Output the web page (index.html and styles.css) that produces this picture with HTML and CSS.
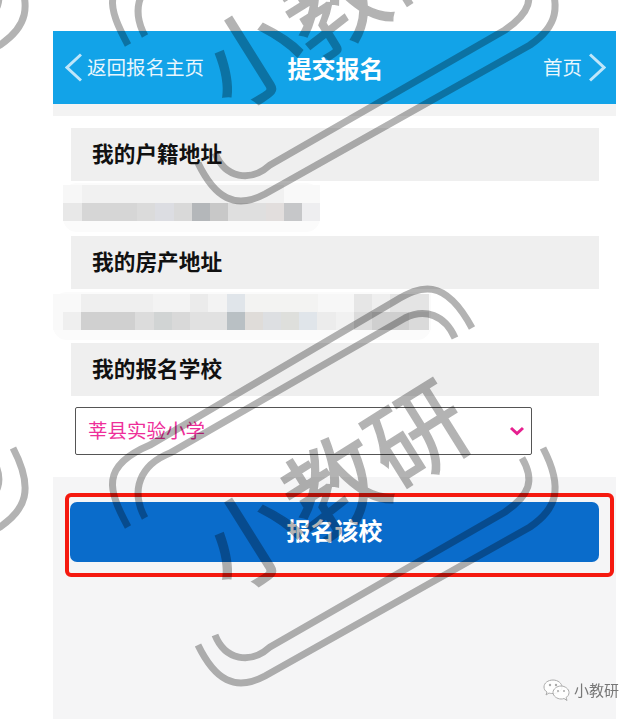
FILE: index.html
```html
<!DOCTYPE html>
<html lang="zh-CN">
<head>
    <meta charset="UTF-8">
    <meta name="viewport" content="width=device-width, initial-scale=1.0">
    <title>提交报名</title>
    <link rel="stylesheet" href="styles.css">
</head>
<body>

    <div class="page">
        <header class="topbar">
            <a class="nav nav-back">
                <svg class="chevron" width="17" height="29" viewBox="0 0 17 29"><path d="M16 1.5 2 14.5l14 13"/></svg>
                <span>返回报名主页</span>
            </a>
            <h1 class="title">提交报名</h1>
            <a class="nav nav-home">
                <span>首页</span>
                <svg class="chevron" width="17" height="29" viewBox="0 0 17 29"><path d="M1 1.5l14 13-14 13"/></svg>
            </a>
        </header>
        <div class="strip"></div>

        <section class="form">
            <div class="label">我的户籍地址</div>
            <div class="value value-first">
                <div class="mosaic mosaic-one">
                    <div class="cells cells-top"></div>
                    <div class="cells cells-bottom"></div>
                </div>
            </div>

            <div class="label">我的房产地址</div>
            <div class="value">
                <div class="mosaic mosaic-two">
                    <div class="cells cells-top"></div>
                    <div class="cells cells-bottom"></div>
                </div>
            </div>

            <div class="label">我的报名学校</div>
            <div class="select">
                <span>莘县实验小学</span>
                <svg class="select-arrow" width="16" height="10" viewBox="0 0 16 10"><path d="M2 2l6 5.5L14 2"/></svg>
            </div>
        </section>

        <section class="submit">
            <div class="highlight">
                <button class="submit-btn">报名该校</button>
            </div>
        </section>
    </div>

    <!-- watermark over the whole picture -->
    <svg class="watermark" width="640" height="719" viewBox="0 0 640 719">
        <defs>
            <g id="mark">
                <path class="mark-line" d="M128 527C108 490 100 466 150 445L395 301C420 286 444 276 472 328"/>
                <path class="mark-line" d="M145 518C130 490 140 465 170 453L405 318C425 308 445 315 455 338"/>
                <path class="mark-line" d="M198 645C215 680 235 692 265 676L530 527C555 510 565 490 543 448"/>
                <path class="mark-line" d="M215 635C225 660 250 665 270 647L505 512C530 495 535 480 522 458"/>
                <text class="mark-text" x="335" y="523" text-anchor="middle" transform="rotate(-32 335 487)">小教研</text>
            </g>
        </defs>
        <g class="mark-group">
            <use href="#mark"/>
            <use href="#mark" y="-482"/>
            <use href="#mark" x="-530"/>
            <use href="#mark" x="-530" y="-482"/>
        </g>
    </svg>

    <div class="credit">
        <svg width="28" height="22" viewBox="0 0 28 22">
            <path class="credit-bubble" d="M10 1C5 1 1 4 1 8c0 2 1 4 3 5l-1 3 3-2c1 .4 2 .5 4 .5 5 0 9-3 9-6.500S15 1 10 1z"/>
            <path class="credit-bubble" d="M18 7c-4 0-8 3-8 6.500S14 20 18 20c1 0 2 0 3-.5l3 2-1-3c2-1 3-3 3-5C26 10 22 7 18 7z"/>
            <circle class="credit-dot" cx="7" cy="6" r="1.200"/>
            <circle class="credit-dot" cx="13" cy="6" r="1.200"/>
            <circle class="credit-dot" cx="15" cy="12" r="1"/>
            <circle class="credit-dot" cx="21" cy="12" r="1"/>
        </svg>
        <span>小教研</span>
    </div>

</body>
</html>
```

FILE: styles.css
```css
* {
    box-sizing: border-box;
}

html, body {
    margin: 0;
    height: 100%;
    overflow: hidden;
}

body {
    position: relative;
    background: white;
    font-family: "Noto Sans CJK SC", "Liberation Sans", sans-serif;
}

.page {
    display: flex;
    flex-direction: column;
    width: 563px;
    height: 100vh;
    margin-left: 53px;
    padding-top: 31px;
}

.topbar {
    display: grid;
    grid-template-columns: 1fr auto 1fr;
    align-items: center;
    height: 73px;
    padding: 0 10px 0 12px;
    background: #12a3e8;
    color: white;
}

.title {
    margin: 0;
    font-size: 24px;
    font-weight: 700;
    line-height: 28px;
}

.nav {
    display: flex;
    align-items: center;
    gap: 5px;
    font-size: 19.5px;
    line-height: 25px;
    color: #e8f6fd;
}

.nav span {
    padding-bottom: 2px;
}

.nav-home {
    justify-content: flex-end;
    gap: 7px;
}

.chevron path {
    fill: none;
    stroke: #bfe6fa;
    stroke-width: 3;
}

.strip {
    height: 12px;
    background: #f3f3f3;
}

.form {
    padding: 12px 17px 0 18px;
}

.label {
    height: 53px;
    padding-left: 21px;
    background: #efefef;
    color: #111;
    font-size: 21.7px;
    font-weight: 700;
    line-height: 50px;
}

.value {
    display: flow-root;
    height: 54px;
}

.value-first {
    height: 55px;
}

.mosaic {
    padding-top: 2px;
    background: #fbfbfb;
    border-radius: 14px;
    filter: blur(0.7px);
}

.mosaic-one {
    width: 257px;
    height: 49px;
    margin: 2px 0 0 -8px;
}

.mosaic-two {
    width: 378px;
    height: 48px;
    margin: 3px 0 0 -18px;
}

.cells {
    height: 18px;
}

.mosaic-one .cells-top {
    background: linear-gradient(90deg, #f7f7f7 0 19px, #f1f1f1 19px 221px, #f9f9f9 221px);
}

.mosaic-one .cells-bottom {
    background: linear-gradient(90deg,
        #e8e8e8 0 19px, #d6d6d6 19px 74px, #dbdbdb 74px 92px, #dcdde2 92px 111px,
        #d9d9d9 111px 129px, #b4b7ba 129px 147px, #c8c8c8 147px 165px,
        #dfdfdf 165px 203px, #e2dedd 203px 221px, #c6c7c9 221px 239px, #eeeef0 239px);
}

.mosaic-two .cells-top {
    background: linear-gradient(90deg,
        #f9f9f9 0 28px, #efefef 28px 100px, #f3f3f3 100px 137px, #ebebeb 137px 155px,
        #f3f3f3 155px 174px, #e0e5ea 174px 192px, #f3f3f2 192px 265px, #f7f7f7 265px 301px,
        #e6e6e6 301px 319px, #efefef 319px 337px, #e4e4e4 337px 376px, #fafafa 376px);
}

.mosaic-two .cells-bottom {
    background: linear-gradient(90deg,
        #f9f9f9 0 10px, #efefef 10px 28px, #d0d0d0 28px 82px, #dcdcdc 82px 101px,
        #d1d4d4 101px 119px, #d9d9d9 119px 137px, #e1e1e1 137px 174px, #b9c0c4 174px 192px,
        #dfdcd9 192px 210px, #dddfe2 210px 228px, #dedfdc 228px 246px, #e0e5ea 246px 264px,
        #ececec 264px 283px, #f1f1f1 283px 301px, #dcdcdc 301px 319px, #cfcfcf 319px 356px,
        #dadada 356px 376px, #fafafa 376px);
}

.select {
    display: flex;
    align-items: center;
    justify-content: space-between;
    width: 457px;
    height: 48px;
    margin: 11px 0 0 4px;
    padding: 0 6px 0 12px;
    background: white;
    border: 1px solid #555;
    border-radius: 2px;
    color: #ee2f9a;
    font-size: 19.5px;
}

.select span {
    padding-bottom: 3px;
}

.select-arrow path {
    fill: none;
    stroke: #e6208f;
    stroke-width: 3;
}

.submit {
    flex: 1;
    margin-top: 22px;
    padding: 16px 2px 0 12px;
    background: #f5f5f6;
}

.highlight {
    padding: 5px 11px 11px 1px;
    border: 4px solid #f5190f;
    border-radius: 6px;
}

.submit-btn {
    display: block;
    width: 100%;
    height: 60px;
    padding: 0 0 5px;
    border: none;
    border-radius: 7px;
    background: #0a6ccb;
    color: white;
    font-family: inherit;
    font-size: 24px;
    font-weight: 700;
}

.watermark {
    position: absolute;
    top: 0;
    left: 0;
    pointer-events: none;
}

.mark-group {
    opacity: 0.3;
}

.mark-line {
    fill: none;
    stroke: black;
    stroke-width: 7;
}

.mark-text {
    fill: black;
    stroke: black;
    stroke-width: 1.5;
    font-size: 98px;
}

.credit {
    position: absolute;
    left: 543px;
    top: 679px;
    display: flex;
    align-items: center;
    gap: 3px;
    color: #777;
    font-size: 15px;
    line-height: 22px;
}

.credit-bubble {
    fill: rgba(255, 255, 255, 0.85);
    stroke: #aaa;
}

.credit-dot {
    fill: #aaa;
}
```
